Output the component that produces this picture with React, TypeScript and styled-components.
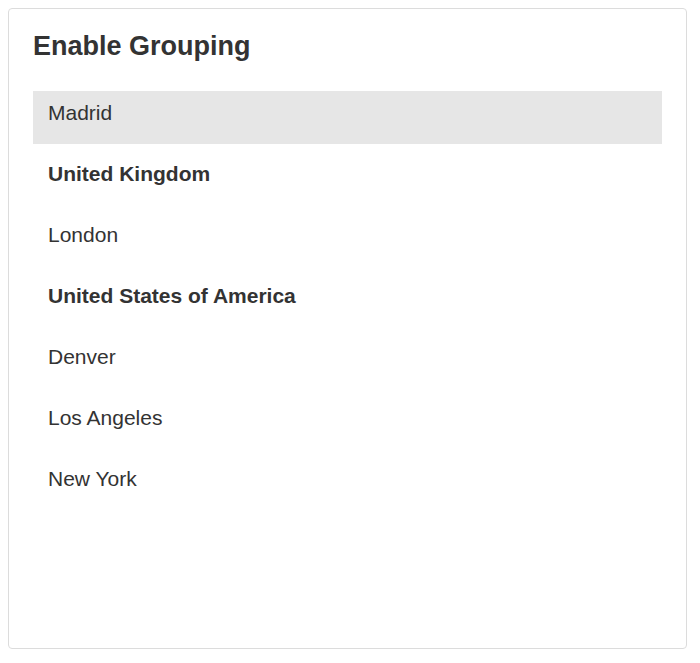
import React from 'react'
import styled, {createGlobalStyle} from 'styled-components'

type rowType = {
  label: string
  group?: boolean
  selected?: boolean
}

const rows: rowType[] = [
  {label: 'Madrid', selected: true},
  {label: 'United Kingdom', group: true},
  {label: 'London'},
  {label: 'United States of America', group: true},
  {label: 'Denver'},
  {label: 'Los Angeles'},
  {label: 'New York'},
]

const GlobalStyle = createGlobalStyle`
  body {
    margin: 8px;
    background: #fff;
    font-family: "Liberation Sans", Arial, sans-serif;
    color: #333;
  }
`

const Card = styled.div`
  box-sizing: border-box;
  width: 679px;
  height: 641px;
  padding: 24px;
  border: 1px solid #dcdcdc;
  border-radius: 4px;
  background: #fff;
`

const Title = styled.h2`
  margin: 0 0 31px;
  font-size: 27px;
  line-height: 27px;
  font-weight: bold;
  color: #333;
`

const List = styled.ul`
  display: flex;
  flex-direction: column;
  gap: 8px;
  list-style: none;
  margin: 0;
  padding: 0;
`

interface RowProps {
  $group?: boolean
  $selected?: boolean
}

const Row = styled.li<RowProps>`
  padding: 11px 15px 21px;
  font-size: 21px;
  line-height: 21px;
  font-weight: ${props => (props.$group ? 'bold' : 'normal')};
  background: ${props => (props.$selected ? '#e6e6e6' : 'transparent')};
`

const App = () => (
  <>
    <GlobalStyle />
    <Card>
      <Title>Enable Grouping</Title>
      <List>
        {rows.map(row => (
          <Row key={row.label} $group={row.group} $selected={row.selected}>
            {row.label}
          </Row>
        ))}
      </List>
    </Card>
  </>
)

export default App
